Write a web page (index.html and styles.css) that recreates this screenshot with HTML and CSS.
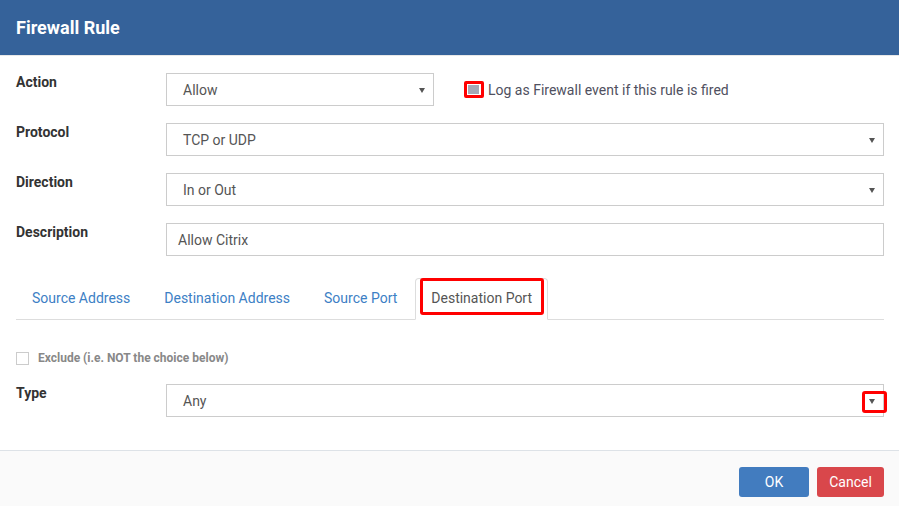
FILE: index.html
```html
<!DOCTYPE html>
<html lang="en">
<head>
    <meta charset="UTF-8">
    <title>Firewall Rule</title>
    <link rel="stylesheet" href="styles.css">
</head>
<body>
    <div class="modal">
        <div class="modal-header">Firewall Rule</div>
        <div class="modal-body">
            <div class="row">
                <label>Action</label>
                <div class="control inline">
                    <div class="select short"><span>Allow</span><i class="caret"></i></div>
                    <div class="log-check">
                        <span class="mark-check"><span class="box"></span></span>
                        <span>Log as Firewall event if this rule is fired</span>
                    </div>
                </div>
            </div>
            <div class="row">
                <label>Protocol</label>
                <div class="select"><span>TCP or UDP</span><i class="caret"></i></div>
            </div>
            <div class="row">
                <label>Direction</label>
                <div class="select"><span>In or Out</span><i class="caret"></i></div>
            </div>
            <div class="row">
                <label>Description</label>
                <div class="input">Allow Citrix</div>
            </div>

            <ul class="tabs">
                <li><a>Source Address</a></li>
                <li><a>Destination Address</a></li>
                <li><a>Source Port</a></li>
                <li class="active"><a>Destination Port</a><span class="mark tab-mark"></span></li>
            </ul>

            <div class="exclude">
                <span class="checkbox"></span>
                <span>Exclude (i.e. NOT the choice below)</span>
            </div>

            <div class="row">
                <label>Type</label>
                <div class="select"><span>Any</span><i class="caret"></i><span class="mark arrow-mark"></span></div>
            </div>
        </div>
        <div class="modal-footer">
            <button class="btn ok">OK</button>
            <button class="btn cancel">Cancel</button>
        </div>
    </div>
</body>
</html>
```

FILE: styles.css
```css
body {
    margin: 0;
    font-family: Roboto, "Liberation Sans", sans-serif;
    font-size: 14px;
    color: #555;
    background: #fff;
}
.modal {
    width: 899px;
}
.modal-header {
    height: 55px;
    line-height: 55px;
    padding: 0 16px;
    background-color: #35629a;
    color: white;
    font-size: 18px;
    font-weight: bold;
    border-bottom: 1px solid #e8e8e8;
}
.modal-body {
    padding: 17px 15px 33px 16px;
}
.row {
    display: grid;
    grid-template-columns: 150px 1fr;
    margin-bottom: 17px;
}
.row label {
    font-weight: bold;
    color: #333;
    line-height: 18px;
}
.control.inline {
    display: flex;
    align-items: center;
}
.select, .input {
    position: relative;
    height: 33px;
    box-sizing: border-box;
    border: 1px solid #ccc;
    display: flex;
    align-items: center;
    padding: 0 8px 0 16px;
    color: #555;
}
.input {
    padding-left: 11px;
}
.select span:first-child {
    flex: 1;
}
.select.short {
    width: 268px;
}
.caret {
    width: 0;
    height: 0;
    border-left: 3.5px solid transparent;
    border-right: 3.5px solid transparent;
    border-top: 5px solid #555;
    margin-top: 1px;
}
.log-check {
    display: flex;
    align-items: center;
    margin-left: 30px;
    color: #4f5060;
}
.mark-check {
    width: 20px;
    height: 17px;
    box-sizing: border-box;
    border: 3px solid #ff0000;
    border-radius: 2px;
    padding: 1px 2px 1px 1px;
    margin-right: 4px;
}
.mark-check .box {
    display: block;
    width: 100%;
    height: 100%;
    background: #a5a8b6;
}
.mark {
    position: absolute;
    box-sizing: border-box;
    border: 3px solid #ff0000;
    border-radius: 3px;
}
.tabs {
    list-style: none;
    margin: 22px 0 0 0;
    padding: 0;
    display: flex;
    border-bottom: 1px solid #ddd;
}
.tabs li {
    position: relative;
    margin-right: 2px;
    margin-bottom: -1px;
}
.tabs a {
    display: block;
    padding: 9px 15px 11px;
    line-height: 20px;
    border: 1px solid transparent;
    border-radius: 4px 4px 0 0;
    color: #3d80c5;
}
.tabs li.active a {
    border-color: #ddd;
    border-bottom-color: #fff;
    background: #fff;
    color: #555;
}
.tab-mark {
    left: 5px;
    right: 4px;
    top: 0;
    bottom: 5px;
}
.exclude {
    display: flex;
    align-items: center;
    height: 20px;
    margin: 28px 0 16px 0;
    font-size: 12px;
    font-weight: bold;
    color: #888;
}
.checkbox {
    width: 13px;
    height: 13px;
    box-sizing: border-box;
    border: 1px solid #ccc;
    margin-right: 9px;
}
.arrow-mark {
    right: -4px;
    top: 6px;
    width: 25px;
    height: 22px;
}
.row:last-child {
    margin-bottom: 0;
}
.modal-footer {
    border-top: 1px solid #dde2e7;
    background: #fafafa;
    padding: 16px 15px 16px 16px;
    display: flex;
    justify-content: flex-end;
    gap: 8px;
}
.btn {
    height: 30px;
    border: none;
    border-radius: 3px;
    color: white;
    font-family: Roboto, "Liberation Sans", sans-serif;
    font-size: 14px;
    padding: 0;
}
.btn.ok {
    width: 70px;
    background-color: #427cbf;
}
.btn.cancel {
    width: 67px;
    background-color: #d9474b;
}
```
